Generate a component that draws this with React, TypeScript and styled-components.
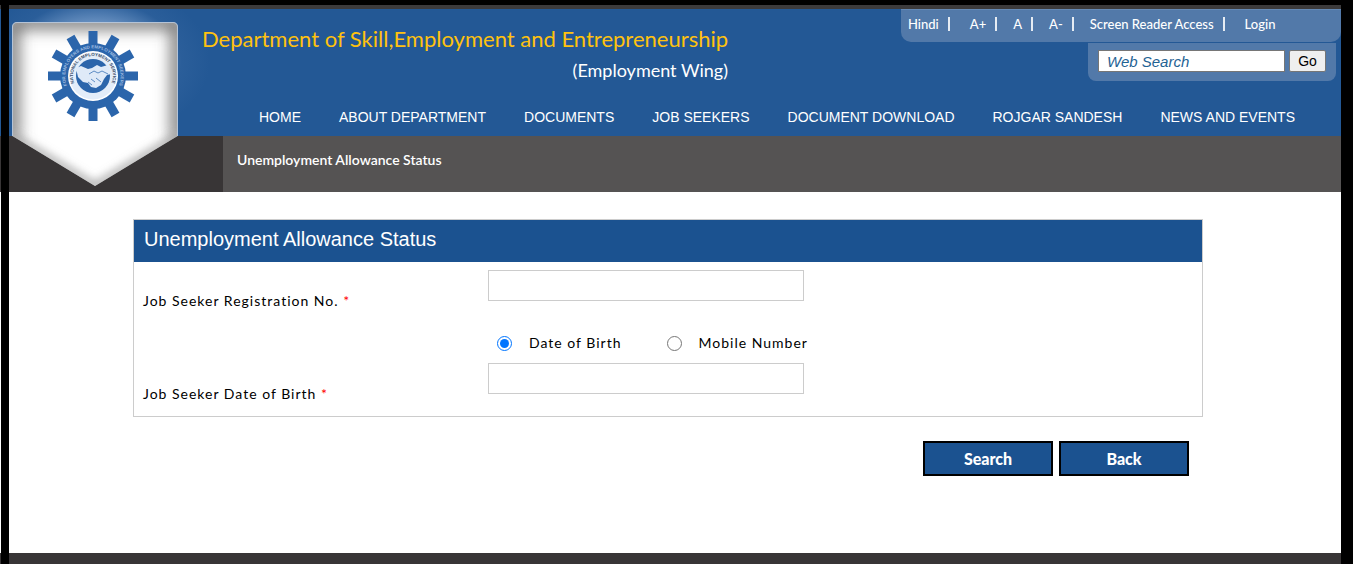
import React, { useState } from "react";
import styled, { createGlobalStyle, css } from "styled-components";

const humanist = `Lato, "Open Sans", sans-serif`;
const grotesque = `"Liberation Sans", Arial, sans-serif`;

const GlobalStyle = createGlobalStyle`
  *, *::before, *::after { box-sizing: border-box; }
  body { margin: 0; background: #fff; font-family: ${humanist}; font-size: 14px; color: #000; }
`;

/* black rails that run down both sides of every band */
const rails = css<{ $fill: string }>`
  padding: 0 12px 0 9px;
  background: linear-gradient(#000, #000) 1px 0 / 8px 100% no-repeat,
    linear-gradient(#000, #000) right / 12px 100% no-repeat, ${(p) => p.$fill};
`;

const Page = styled.div`
  min-height: 100vh;
  display: flex;
  flex-direction: column;
`;
const TopEdge = styled.div`
  ${rails}
  height: 9px;
  border-top: 5px solid #000;
`;
const Header = styled.header`
  ${rails}
  position: relative;
  min-height: 127px;
  display: flex;
  flex-direction: column;
  justify-content: space-between;
`;
const Glow = styled.div`
  position: absolute;
  inset: 0 auto 0 9px;
  width: 230px;
  background: radial-gradient(ellipse 115px 80px at 86px 52px, #a9c4e2 0%, rgba(127, 163, 207, 0.8) 45%, rgba(60, 108, 165, 0.3) 75%, rgba(35, 88, 149, 0) 100%);
`;
const LogoLink = styled.a`
  position: absolute;
  left: 9px;
  top: 0;
  z-index: 1;
  line-height: 0;
`;
const HeaderTop = styled.div`
  display: flex;
  justify-content: space-between;
  align-items: flex-start;
`;
const Titles = styled.div`
  padding: 15px 0 0 193px;
  display: flex;
  flex-direction: column;
`;
const Title = styled.h1`
  margin: 0;
  font-size: 22px;
  line-height: 30px;
  font-weight: 400;
  color: #ffc20e;
`;
const Subtitle = styled.p`
  margin: 0;
  text-align: right;
  font-size: 18px;
  line-height: 32px;
  color: #fff;
`;
const Tools = styled.div`
  display: flex;
  flex-direction: column;
  align-items: flex-end;
`;
const UtilityBar = styled.ul`
  margin: 0;
  padding: 0 0 4px 7px;
  width: 440px;
  height: 33px;
  list-style: none;
  display: flex;
  align-items: center;
  background: #5279a9;
  border-top: 1px solid #6489b5;
  border-radius: 0 0 10px 10px;
`;
const UtilityItem = styled.li<{ $wide: boolean }>`
  display: flex;
  align-items: center;
  &:not(:last-child)::after {
    content: "";
    width: 2px;
    height: 14px;
    margin: 0 ${(p) => (p.$wide ? 20 : 16)}px 0 9px;
    background: #e6ecf3;
  }
`;
const UtilityLink = styled.a`
  color: #fff;
  font-size: 13px;
  line-height: 18px;
  font-weight: 500;
  text-decoration: none;
`;
const SearchForm = styled.form`
  margin: 1px 5px 0 0;
  padding: 7px 10px 9px;
  width: 248px;
  height: 38px;
  display: flex;
  gap: 4px;
  background: #5279a9;
  border-radius: 0 0 8px 8px;
`;
const SearchBox = styled.input`
  flex: 1;
  min-width: 0;
  padding: 0 8px;
  border: 1px solid #767676;
  font: italic 15px ${grotesque};
  &::placeholder { color: #1f6394; opacity: 1; }
`;
const GoButton = styled.button`
  width: 37px;
  padding: 0;
  border: 1px solid #767676;
  border-radius: 2px;
  background: #efefef;
  color: #000;
  font: 14px ${grotesque};
`;
const Nav = styled.nav`
  padding: 0 0 10px 250px;
  display: flex;
  gap: 38px;
`;
const NavLink = styled.a`
  font: 14px/18px ${grotesque};
  color: #fff;
  text-decoration: none;
  white-space: nowrap;
`;
const Crumbs = styled.div`
  ${rails}
  display: flex;
  height: 56px;
`;
const CrumbTrail = styled.div`
  flex: 1;
  margin-left: 214px;
  padding: 15px 14px;
  background: #555353;
  color: #fff;
  font-size: 14px;
  line-height: 18px;
  font-weight: 600;
`;
const Main = styled.main`
  ${rails}
  min-height: 361px;
`;
const Content = styled.form`
  margin: 27px 138px 0 124px;
`;
const Panel = styled.section`
  border: 1px solid #ccc;
`;
const PanelTitle = styled.h2`
  margin: 0;
  padding: 6px 10px 10px;
  background: #1b5290;
  color: #fff;
  font: 20px/26px ${grotesque};
`;
const Fields = styled.div`
  padding: 8px 9px 12px;
  display: grid;
  grid-template-columns: 345px 1fr;
`;
const FieldLabel = styled.label`
  padding-top: 21px;
  line-height: 20px;
  letter-spacing: 1px;
`;
const Required = styled.span`
  color: #f00;
`;
const FieldInput = styled.input`
  width: 316px;
  height: 31px;
  padding: 4px 8px;
  border: 1px solid #ccc;
  font: 14px ${humanist};
`;
const Choices = styled.div`
  grid-column: 2;
  height: 52px;
  padding: 12px 9px 0;
  display: flex;
  align-items: center;
  gap: 45px;
`;
const Choice = styled.label`
  display: flex;
  align-items: center;
  gap: 17px;
  line-height: 20px;
  letter-spacing: 1px;
`;
const Radio = styled.input`
  width: 15px;
  height: 15px;
  margin: 0;
`;
const Actions = styled.div`
  padding: 24px 14px 0 0;
  display: flex;
  justify-content: flex-end;
  gap: 6px;
`;
const ActionButton = styled.button`
  width: 130px;
  height: 35px;
  padding: 0;
  border: 2px solid #000;
  background: #1b5290;
  color: #fff;
  font: 900 16px ${humanist};
`;
const Footer = styled.footer`
  ${rails}
  flex: 1;
  min-height: 11px;
`;

const SHIELD = "M3.500 18q0 -4.500 4.500 -4.500h156q4.500 0 4.500 4.500v109l-82.500 50l-82.500 -50z";

const Logo = () => (
  <svg width="172" height="180" viewBox="0 0 172 180" role="img" aria-label="National Employment Service">
    <defs>
      <clipPath id="shield"><path d={SHIELD} /></clipPath>
      <filter id="soft" x="-20%" y="-20%" width="140%" height="140%"><feGaussianBlur stdDeviation="8" /></filter>
      <filter id="faint" x="-20%" y="-20%" width="140%" height="140%"><feGaussianBlur stdDeviation="5" /></filter>
      <path id="innerArc" d="M69.900 81.100a20 20 0 1 1 28.200 0" />
      <path id="outerArc" d="M64.900 87.100a27.700 27.700 0 1 1 38.200 0" />
    </defs>
    <path d={SHIELD} fill="#fff" />
    <g clipPath="url(#shield)" fill="none">
      <path d="M3 132V13H169V132" stroke="#666" strokeWidth="13" filter="url(#soft)" />
      <path d="M3 127l83 50l83 -50" stroke="#888" strokeWidth="5" filter="url(#faint)" />
    </g>
    <path d="M3.500 127V18q0 -4.500 4.500 -4.500h156q4.500 0 4.500 4.500v109" fill="none" stroke="#b4c3d6" />
    <g transform="translate(84 67)">
      <g fill="#2b65ab">
        {Array.from({ length: 12 }, (_, i) => (
          <rect key={i} x="-4.500" y="-45" width="9" height="17" transform={`rotate(${i * 30})`} />
        ))}
        <circle r="33" />
      </g>
      <circle r="25" fill="#fff" />
      <circle r="23.500" fill="#e3edf9" />
      <circle r="17" fill="#2b65ab" />
      <path d="M-17 -8l5 -2l7 3l4 -1l5 -3l4 2l7 -2l3 9l-4 1l-3 4l-3 6l-5 3l-5 -1l-3 -4l-5 -1l-5 -5z" fill="#dfeaf8" />
      <path d="M-4 -2l5 -3l4 2l4 -2l6 3M-2 3l4 3M-5 6l4 3M3 2l5 4" fill="none" stroke="#5d8cc4" />
    </g>
    <g fontFamily="Liberation Sans" fontWeight="700" textAnchor="middle">
      <text fontSize="4.500" fill="#3a4c66">
        <textPath href="#innerArc" startOffset="50%">NATIONAL EMPLOYMENT SERVICE</textPath>
      </text>
      <text fontSize="4.500" fill="#9dbbe0">
        <textPath href="#outerArc" startOffset="50%">FOR EMPLOYERS AND EMPLOYMENT SEEKERS</textPath>
      </text>
    </g>
  </svg>
);

const utilities = [
  { label: "Hindi", wide: true },
  { label: "A+", wide: false },
  { label: "A", wide: false },
  { label: "A-", wide: false },
  { label: "Screen Reader Access", wide: true },
  { label: "Login", wide: false },
];
const sections = ["HOME", "ABOUT DEPARTMENT", "DOCUMENTS", "JOB SEEKERS", "DOCUMENT DOWNLOAD", "ROJGAR SANDESH", "NEWS AND EVENTS"];

export default function App() {
  const [by, setBy] = useState("dob");
  return (
    <Page>
      <GlobalStyle />
      <TopEdge $fill="#3c3b3c" />
      <Header $fill="#235895">
        <Glow />
        <LogoLink href="#"><Logo /></LogoLink>
        <HeaderTop>
          <Titles>
            <Title>Department of Skill,Employment and Entrepreneurship</Title>
            <Subtitle>(Employment Wing)</Subtitle>
          </Titles>
          <Tools>
            <UtilityBar>
              {utilities.map((u) => (
                <UtilityItem key={u.label} $wide={u.wide}>
                  <UtilityLink href="#">{u.label}</UtilityLink>
                </UtilityItem>
              ))}
            </UtilityBar>
            <SearchForm>
              <SearchBox type="text" aria-label="Web Search" placeholder="Web Search" />
              <GoButton type="button">Go</GoButton>
            </SearchForm>
          </Tools>
        </HeaderTop>
        <Nav>
          {sections.map((s) => <NavLink key={s} href="#">{s}</NavLink>)}
        </Nav>
      </Header>
      <Crumbs $fill="#383536">
        <CrumbTrail>Unemployment Allowance Status</CrumbTrail>
      </Crumbs>
      <Main $fill="#fff">
        <Content>
          <Panel>
            <PanelTitle>Unemployment Allowance Status</PanelTitle>
            <Fields>
              <FieldLabel htmlFor="regNo">Job Seeker Registration No. <Required>*</Required></FieldLabel>
              <FieldInput id="regNo" type="text" />
              <Choices>
                <Choice>
                  <Radio type="radio" name="by" checked={by === "dob"} onChange={() => setBy("dob")} />
                  Date of Birth
                </Choice>
                <Choice>
                  <Radio type="radio" name="by" checked={by === "mobile"} onChange={() => setBy("mobile")} />
                  Mobile Number
                </Choice>
              </Choices>
              <FieldLabel htmlFor="dob">Job Seeker Date of Birth <Required>*</Required></FieldLabel>
              <FieldInput id="dob" type="text" />
            </Fields>
          </Panel>
          <Actions>
            <ActionButton type="button">Search</ActionButton>
            <ActionButton type="button">Back</ActionButton>
          </Actions>
        </Content>
      </Main>
      <Footer $fill="#383536" />
    </Page>
  );
}
